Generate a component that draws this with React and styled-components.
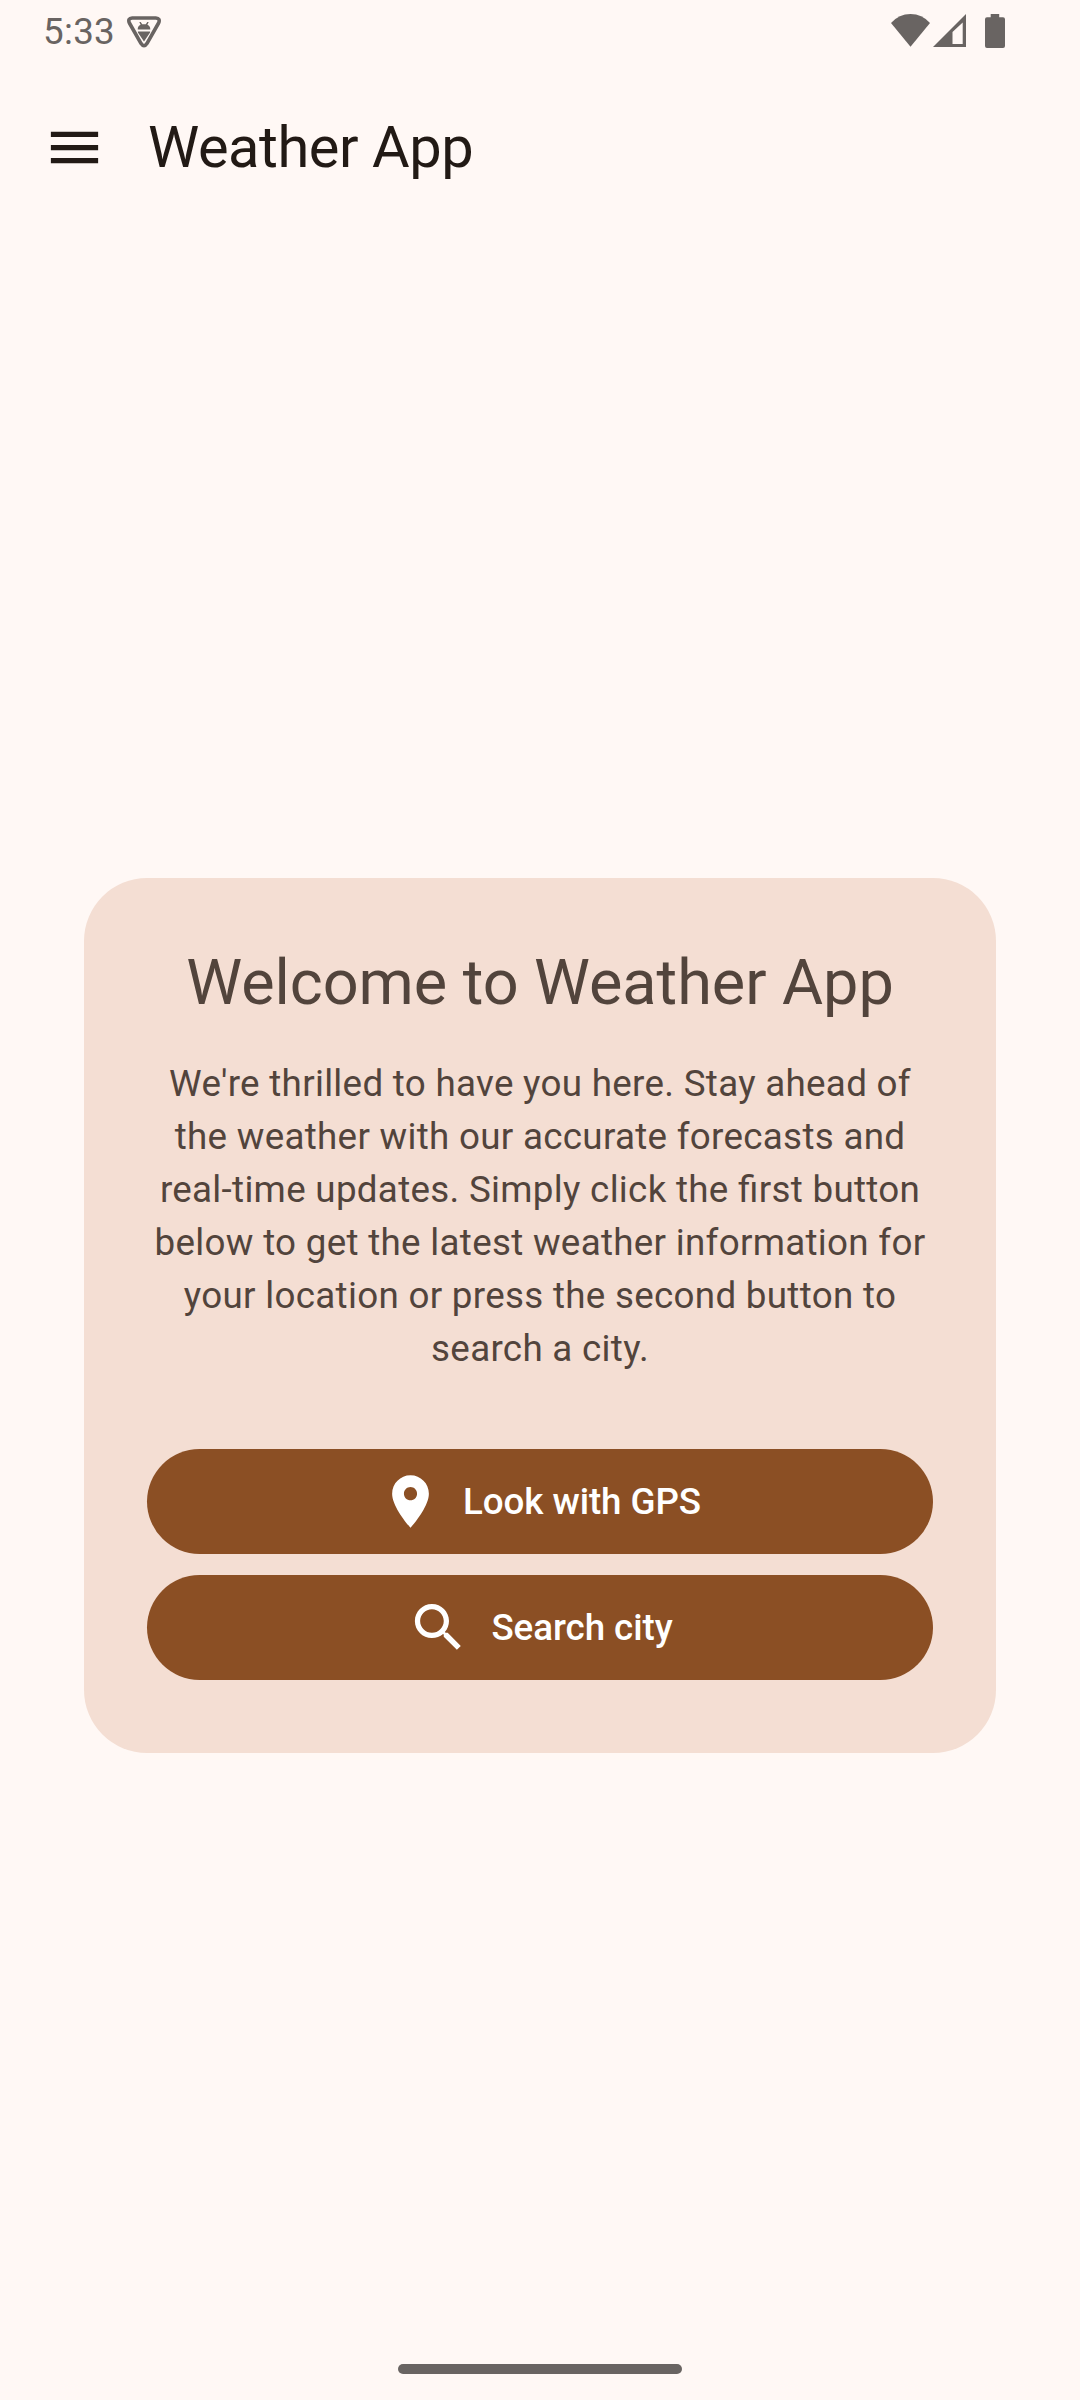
import React from 'react';
import styled, { createGlobalStyle } from 'styled-components';

const GlobalStyle = createGlobalStyle`
  * { box-sizing: border-box; }
  body { margin: 0; background: #fff8f5; }
`;

const Screen = styled.div`
  position: relative;
  display: flex;
  flex-direction: column;
  width: 1080px;
  height: 2400px;
  overflow: hidden;
  background: #fff8f5;
  color: #221a15;
  font-family: Roboto, 'Liberation Sans', sans-serif;
`;

const StatusBar = styled.header`
  display: flex;
  align-items: center;
  justify-content: space-between;
  height: 63px;
  padding: 0 75px 0 43px;
  color: #696462;
`;

const StatusGroup = styled.div`
  display: flex;
  align-items: center;
`;

const Clock = styled.span`
  width: 84px;
  font-size: 36.75px;
  line-height: 63px;
  letter-spacing: 0.3px;
`;

const StatusIcon = styled.svg`
  display: block;
  width: ${(p) => p.$width}px;
  height: 63px;
  margin-left: ${(p) => p.$gap || 0}px;
  fill: currentColor;
`;

const AppBar = styled.nav`
  display: flex;
  align-items: center;
  gap: 42px;
  height: 168px;
  padding-left: 43px;
`;

const MenuButton = styled.button`
  display: flex;
  padding: 0;
  border: 0;
  background: none;
  color: inherit;
`;

const Icon = styled.svg`
  display: block;
  flex: none;
  width: 63px;
  height: 63px;
  fill: currentColor;
`;

const AppTitle = styled.h1`
  margin: 0;
  font-size: 57.75px;
  font-weight: 400;
  line-height: 74px;
  letter-spacing: -0.45px;
`;

const Content = styled.main`
  flex: 1;
  display: flex;
  align-items: center;
  justify-content: center;
`;

const Card = styled.section`
  width: 912px;
  padding: 63px 63px 73px;
  border-radius: 63px;
  background: #f4ded3;
  color: #52443c;
  text-align: center;
`;

const Heading = styled.h2`
  margin: 0 0 32px;
  font-size: 63px;
  font-weight: 400;
  line-height: 84px;
  letter-spacing: -0.05px;
`;

const Message = styled.p`
  margin: 0 0 74px;
  font-size: 36.75px;
  line-height: 53px;
  letter-spacing: 0.3px;
  font-feature-settings: 'liga' 1;
`;

const Actions = styled.div`
  display: flex;
  flex-direction: column;
  gap: 21px;
`;

const ActionButton = styled.button`
  display: flex;
  align-items: center;
  justify-content: center;
  gap: 21px;
  height: 105px;
  padding: 0;
  border: 0;
  border-radius: 53px;
  background: #8b4f24;
  color: #fff;
  font: 500 36.75px/53px Roboto, 'Liberation Sans', sans-serif;
  letter-spacing: -0.07px;
`;

const GestureHandle = styled.div`
  position: absolute;
  left: 398px;
  bottom: 26px;
  width: 284px;
  height: 10px;
  border-radius: 5px;
  background: #696462;
`;

const DebugIcon = () => (
  <StatusIcon $width={34} viewBox="0 0 34 63">
    <path
      d="M5.2 18H28.8Q33.6 18.4 31.6 23L19.9 43.6Q17 48 14.1 43.6L2.4 23Q.4 18.4 5.2 18Z"
      fill="none"
      stroke="currentColor"
      strokeWidth="3.6"
      strokeLinejoin="round"
    />
    <path d="M10.7 29.5Q10.7 26 13.6 24.8L12.3 22H13.7L15.2 24.3H18.8L20.3 22H21.7L20.4 24.8Q23.3 26 23.3 29.5ZM10.9 31.4H23.1V32.6L17 41.4L10.9 32.6Z" />
  </StatusIcon>
);

const WifiIcon = () => (
  <StatusIcon $width={39} viewBox="0 0 39 63">
    <path d="M0 23Q8 14 19.5 14T39 23L19.5 46.8Z" />
  </StatusIcon>
);

const SignalIcon = () => (
  <StatusIcon $width={33} $gap={3} viewBox="0 0 33 63">
    <path fillRule="evenodd" d="M0 47L33 14V47ZM19.5 32V44H29.7V22.5Z" />
  </StatusIcon>
);

const BatteryIcon = () => (
  <StatusIcon $width={20} $gap={19} viewBox="0 0 20 63">
    <path d="M5.7 14H14.2V17.2H18Q20 17.2 20 19.2V46Q20 48 18 48H2Q0 48 0 46V19.2Q0 17.2 2 17.2H5.7Z" />
  </StatusIcon>
);

const MenuIcon = () => (
  <Icon viewBox="0 0 24 24">
    <path d="M3 18h18v-2H3v2zm0-5h18v-2H3v2zm0-7v2h18V6H3z" />
  </Icon>
);

const PlaceIcon = () => (
  <Icon viewBox="0 0 24 24">
    <path d="M12 2C8.13 2 5 5.13 5 9c0 5.25 7 13 7 13s7-7.75 7-13c0-3.87-3.13-7-7-7zm0 9.5c-1.38 0-2.5-1.12-2.5-2.5s1.12-2.5 2.5-2.5 2.5 1.12 2.5 2.5-1.12 2.5-2.5 2.5z" />
  </Icon>
);

const SearchIcon = () => (
  <Icon viewBox="0 0 24 24">
    <path d="M15.5 14h-.79l-.28-.27C15.41 12.59 16 11.11 16 9.5 16 5.91 13.09 3 9.5 3S3 5.91 3 9.5 5.91 16 9.5 16c1.61 0 3.09-.59 4.23-1.57l.27.28v.79l5 4.99L20.49 19l-4.99-5zm-6 0C7.01 14 5 11.99 5 9.5S7.01 5 9.5 5 14 7.01 14 9.5 11.99 14 9.5 14z" />
  </Icon>
);

export default function App() {
  return (
    <Screen>
      <GlobalStyle />
      <StatusBar>
        <StatusGroup>
          <Clock>5:33</Clock>
          <DebugIcon />
        </StatusGroup>
        <StatusGroup>
          <WifiIcon />
          <SignalIcon />
          <BatteryIcon />
        </StatusGroup>
      </StatusBar>
      <AppBar>
        <MenuButton aria-label="Menu">
          <MenuIcon />
        </MenuButton>
        <AppTitle>Weather App</AppTitle>
      </AppBar>
      <Content>
        <Card>
          <Heading>Welcome to Weather App</Heading>
          <Message>
            We're thrilled to have you here. Stay ahead of the weather with our
            accurate forecasts and real-time updates. Simply click the first
            button below to get the latest weather information for your location
            or press the second button to search a city.
          </Message>
          <Actions>
            <ActionButton>
              <PlaceIcon />
              Look with GPS
            </ActionButton>
            <ActionButton>
              <SearchIcon />
              Search city
            </ActionButton>
          </Actions>
        </Card>
      </Content>
      <GestureHandle />
    </Screen>
  );
}
